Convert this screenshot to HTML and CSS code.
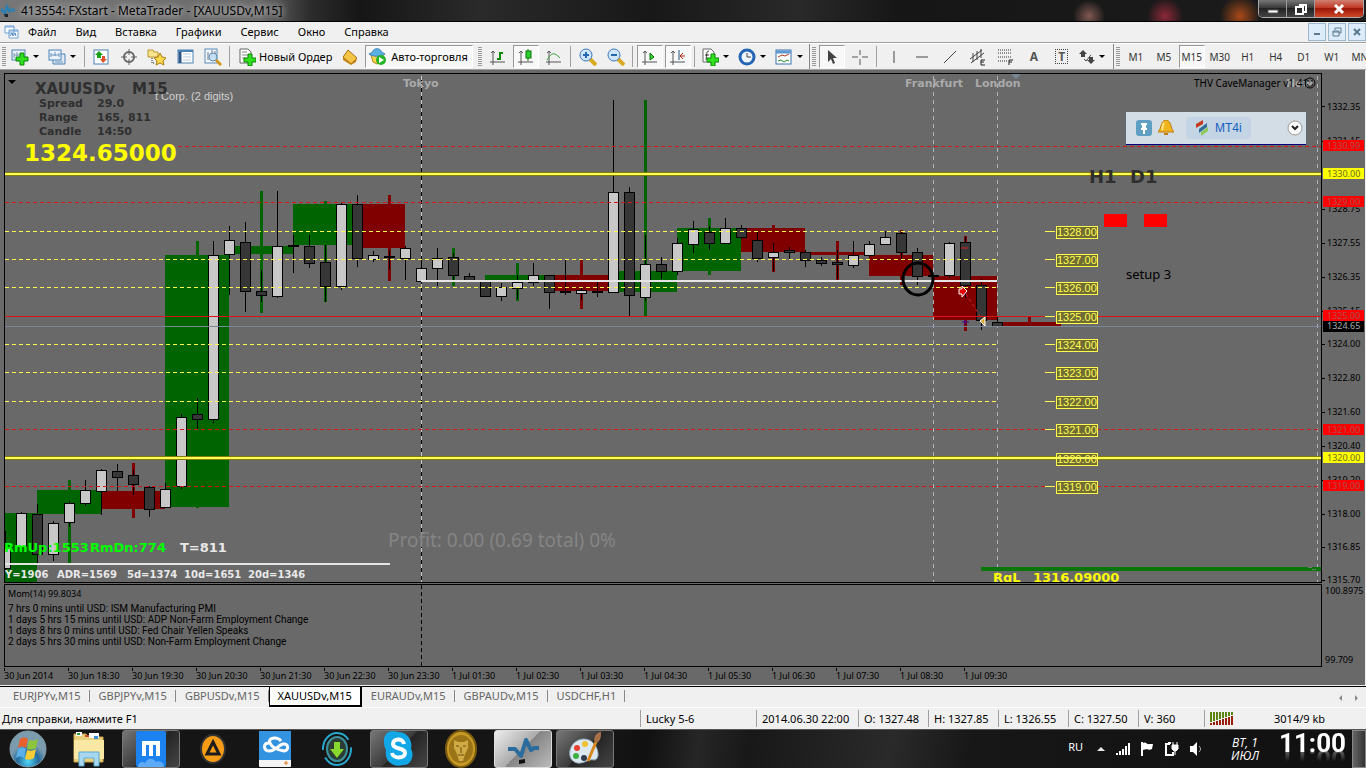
FILE: index.html
```html
<!DOCTYPE html>
<html lang="ru">
<head>
<meta charset="utf-8">
<title>413554: FXstart - MetaTrader - [XAUUSDv,M15]</title>
<link rel="stylesheet" href="styles.css">
</head>
<body>
<header class="titlebar">
  <svg class="title-icon" width="16" height="14" viewBox="0 0 16 14"><path d="M1 5l4 4 2-6 3 4 2-1 3 0" fill="none" stroke="#2f7fae" stroke-width="3"/><path d="M4 10h4v3h-3z" fill="#15232c"/></svg>
  <h1 class="title">413554: FXstart - MetaTrader - [XAUUSDv,M15]</h1>
  <div class="caption">
    <button class="cap" aria-label="Свернуть"><svg width="12" height="12"><rect x="1" y="7" width="10" height="3" fill="#fff" stroke="#555"/></svg></button>
    <button class="cap" aria-label="Развернуть"><svg width="14" height="12"><path d="M5 2h7v7h-2M2 4h7v7h-7z" fill="none" stroke="#fff" stroke-width="2"/></svg></button>
    <button class="cap cap-close" aria-label="Закрыть"><svg width="12" height="12"><path d="M2 2l8 8M10 2l-8 8" stroke="#fff" stroke-width="3"/></svg></button>
  </div>
</header>

<nav class="menubar">
  <svg width="15" height="14" viewBox="0 0 15 14"><path d="M1 1h9v7h-9zM5 5h9v8h-9z" fill="#fff" stroke="#6aa0d0"/><path d="M1 2h9M5 6h9" stroke="#6aa0d0"/><path d="M6 11l2-3 1 3 2-3 1 3" fill="none" stroke="#4a80c0"/></svg>
  <button>Файл</button><button>Вид</button><button>Вставка</button><button>Графики</button><button>Сервис</button><button>Окно</button><button>Справка</button>
  <div class="mdi">
    <button aria-label="Свернуть окно"><svg width="10" height="10"><path d="M2 7h6" stroke="#5c7890" stroke-width="2"/></svg></button>
    <button aria-label="Восстановить окно"><svg width="10" height="10"><path d="M3 3v-2h6v5h-2M1 4h6v5h-6zM1 5h6" fill="none" stroke="#5c7890"/></svg></button>
    <button aria-label="Закрыть окно"><svg width="10" height="10"><path d="M2 2l6 6M8 2l-6 6" stroke="#5c7890" stroke-width="2"/></svg></button>
  </div>
</nav>

<div class="toolbar">
  <div class="group">
    <i class="grip"></i>
    <button class="tb drop" aria-label="Новый график"><svg width="18" height="18"><rect x="1" y="2" width="13" height="10" fill="#eaf3fb" stroke="#4c82b4"/><path d="M3 5v5M6 4v4M3 7h7" stroke="#7a98b4" fill="none"/><path d="M9 5h4v4h4v4h-4v4h-4v-4h-4v-4h4z" fill="#2fe01c" stroke="#0b850b"/></svg></button>
    <button class="tb drop" aria-label="Профили"><svg width="18" height="18"><path d="M5 6h12v10h-12z" fill="#dfeaf5" stroke="#4c82b4"/><rect x="1" y="2" width="12" height="10" fill="#eaf3fb" stroke="#4c82b4"/><path d="M3 5v4M7 4v4M11 5v4M3 7h8M7 14h8" stroke="#6d94ba"/></svg></button>
    <i class="sep"></i>
    <button class="tb" aria-label="Обзор рынка"><svg width="16" height="16"><rect x="1" y="1" width="14" height="14" fill="#fff" stroke="#4c82b4"/><path d="M6 2l4 4h-2v3h-4v-3h-2z" fill="#18a018"/><path d="M10 14l4-4h-2v-3h-3v3h-2z" fill="#e05028"/></svg></button>
    <button class="tb" aria-label="Окно данных"><svg width="16" height="16"><circle cx="8" cy="8" r="5" fill="none" stroke="#666" stroke-width="2"/><path d="M8 0v6M8 10v6M0 8h6M10 8h6" stroke="#666"/></svg></button>
    <button class="tb" aria-label="Навигатор"><svg width="20" height="18"><path d="M1 2h5l1 2h4v5h-10z" fill="#f8e48c" stroke="#b9962c"/><path d="M5 10v5h3" fill="none" stroke="#222" stroke-dasharray="1 1"/><path d="M13 5l2 4 4 1-3 3 1 4-4-2-4 2 1-4-3-3 4-1z" fill="#fbd84c" stroke="#a87c14"/></svg></button>
    <button class="tb" aria-label="Терминал"><svg width="17" height="16"><rect x="1" y="1" width="15" height="13" fill="#fff" stroke="#4c82b4"/><path d="M3 1v13" stroke="#2e5686" stroke-width="3"/><path d="M1 2h15" stroke="#4c82b4" stroke-width="2"/><path d="M6 5h8M6 8h8M6 11h8" stroke="#b8cbdd"/></svg></button>
    <button class="tb" aria-label="Тестер стратегий"><svg width="18" height="18"><rect x="1" y="1" width="12" height="14" fill="#f2f6fa" stroke="#5a8cba"/><path d="M4 4v8M8 2v8M11 3v8" stroke="#778"/><circle cx="9" cy="9" r="4" fill="#c4e2f6" fill-opacity=".8" stroke="#5a8cba"/><path d="M12 12l5 5" stroke="#d09a20" stroke-width="3"/></svg></button>
    <i class="sep"></i>
    <button class="tb order"><svg width="18" height="18"><path d="M2 1h8l3 3v11h-11z" fill="#fff" stroke="#666"/><path d="M4 4h5M4 7h6M4 10h4" stroke="#888"/><path d="M10 6h4v4h4v4h-4v4h-4v-4h-4v-4h4z" fill="#2fe01c" stroke="#0b850b"/></svg><span>Новый Ордер</span></button>
    <button class="tb" aria-label="Редактор"><svg width="18" height="16"><path d="M7 1l9 8-6 6-8-7z" fill="#f5c548" stroke="#a4701a"/><path d="M2 8l8 6 6-5-1 4-5 3-8-5z" fill="#c48318"/></svg></button>
    <button class="tb pressed auto"><svg width="18" height="17"><path d="M3 7h12l-2 7-4 2-4-2z" fill="#f5d34c" stroke="#b28a18"/><path d="M1 6c3-2 4-1 4-3 1-3 7-3 8 0 0 2 2 1 4 3-4 3-12 3-16 0z" fill="#5ab0e4" stroke="#3a82b4"/><circle cx="13" cy="12" r="5" fill="#24b324"/><path d="M11 9v6l5-3z" fill="#fff"/></svg><span>Авто-торговля</span></button>
  </div>
  <div class="group charts">
    <i class="grip"></i>
    <button class="tb" aria-label="Бары"><svg width="16" height="16"><path d="M3 2v14M0 13h15M1 4l2-2 2 2" stroke="#555" fill="none"/><path d="M10 3v8M10 4h3M7 10h3" stroke="#0c8a0c" stroke-width="2"/></svg></button>
    <button class="tb pressed" aria-label="Свечи"><svg width="16" height="16"><path d="M3 2v14M0 13h15M1 4l2-2 2 2" stroke="#555" fill="none"/><path d="M10 0v12" stroke="#077507"/><rect x="8" y="2" width="5" height="7" fill="#2ccf2c" stroke="#077507"/></svg></button>
    <button class="tb" aria-label="Линия"><svg width="16" height="16"><path d="M3 2v14M0 13h15M1 4l2-2 2 2" stroke="#555" fill="none"/><path d="M1 11c5-8 7-8 13-2" fill="none" stroke="#38a038"/></svg></button>
    <i class="sep"></i>
    <button class="tb" aria-label="Увеличить"><svg width="18" height="18"><path d="M11 11l6 6" stroke="#d9ab20" stroke-width="4"/><circle cx="7" cy="7" r="6" fill="#cfe6fa" stroke="#3b78bc"/><path d="M4 7h6M7 4v6" stroke="#2468b0" stroke-width="2"/></svg></button>
    <button class="tb" aria-label="Уменьшить"><svg width="18" height="18"><path d="M11 11l6 6" stroke="#d9ab20" stroke-width="4"/><circle cx="7" cy="7" r="6" fill="#cfe6fa" stroke="#3b78bc"/><path d="M4 7h6" stroke="#2468b0" stroke-width="2"/></svg></button>
    <i class="sep"></i>
    <button class="tb pressed" aria-label="Автопрокрутка"><svg width="16" height="16"><path d="M3 2v14M0 13h15M1 4l2-2 2 2" stroke="#555" fill="none"/><path d="M8 4v7l4-3z" fill="#38d038" stroke="#077507"/></svg></button>
    <button class="tb pressed" aria-label="Сдвиг графика"><svg width="16" height="16"><path d="M3 2v14M0 13h15M1 4l2-2 2 2" stroke="#555" fill="none"/><path d="M9 1v10" stroke="#27557c"/><path d="M15 7h-4M13 4l-3 3 3 3" stroke="#b0280c" fill="none"/></svg></button>
    <i class="sep"></i>
    <button class="tb drop" aria-label="Индикаторы"><svg width="18" height="18"><path d="M2 1h8l3 3v10h-11z" fill="#fff" stroke="#666"/><path d="M8 3c-3 0-2 4-3 9M4 7h4" stroke="#333" fill="none"/><path d="M10 6h4v4h4v4h-4v4h-4v-4h-4v-4h4z" fill="#2fe01c" stroke="#0b850b"/></svg></button>
    <button class="tb drop" aria-label="Периодичность"><svg width="18" height="18"><circle cx="9" cy="9" r="7" fill="#eef6fe" stroke="#2464b4" stroke-width="3"/><path d="M9 5v4h4" fill="none" stroke="#444"/></svg></button>
    <button class="tb drop" aria-label="Шаблоны"><svg width="18" height="16"><rect x="1" y="1" width="15" height="14" fill="#fff" stroke="#3a72aa"/><path d="M1 3h15" stroke="#5c98d4" stroke-width="3"/><path d="M3 8l4-2 3 1 4-2" fill="none" stroke="#a83c20"/><path d="M3 12l3-1 3 2 3-2 2 1" fill="none" stroke="#208a30"/></svg></button>
  </div>
  <div class="group charts bordered">
    <i class="grip"></i>
    <button class="tb pressed" aria-label="Курсор"><svg width="16" height="16"><path d="M4 1v12l3-3 2 5 2-1-2-5h4z" fill="#444"/></svg></button>
    <button class="tb" aria-label="Перекрестие"><svg width="16" height="16"><path d="M8 1v5M8 10v6M0 8h6M10 8h6" stroke="#555"/></svg></button>
    <i class="sep"></i>
    <button class="tb" aria-label="Вертикальная линия"><svg width="16" height="16"><path d="M8 2v12" stroke="#444"/></svg></button>
    <button class="tb" aria-label="Горизонтальная линия"><svg width="16" height="16"><path d="M2 8h12" stroke="#444"/></svg></button>
    <button class="tb" aria-label="Трендовая линия"><svg width="16" height="16"><path d="M2 14l12-12" stroke="#444"/></svg></button>
    <button class="tb" aria-label="Канал"><svg width="18" height="18"><path d="M1 11l12-9M2 15l13-10M4 5v9M8 3v9M12 1v9" stroke="#444"/><path d="M16 12h-4v5h4M12 14h3" fill="none" stroke="#222"/></svg></button>
    <button class="tb" aria-label="Фибоначчи"><svg width="18" height="18"><path d="M1 2h14M1 5h14M1 9h14M1 13h9" stroke="#333" stroke-dasharray="1 1"/><path d="M12 17v-5h4M12 14h3" fill="none" stroke="#222"/></svg></button>
    <button class="tb letter">A</button>
    <button class="tb letter" aria-label="Текстовая метка"><span class="label-t">T</span></button>
    <button class="tb drop" aria-label="Стрелки"><svg width="16" height="16"><path d="M4 1l4 4h-2v3h-4v-3h-2z" fill="#444"/><path d="M5 10l2 2 5-6" fill="none" stroke="#444"/><path d="M12 15l4-4h-2v-3h-4v3h-2z" fill="#444"/></svg></button>
  </div>
  <div class="group bordered periods">
    <i class="grip"></i>
    <button class="tb">M1</button><button class="tb">M5</button><button class="tb pressed">M15</button><button class="tb">M30</button><button class="tb">H1</button><button class="tb">H4</button><button class="tb">D1</button><button class="tb">W1</button><button class="tb">MN</button>
  </div>
</div>

<main class="chart">
  <section class="pane">
    <svg class="canvas" shape-rendering="crispEdges">
      <g transform="translate(-5 -74)">
        <g fill="#006400">
          <path d="M5 513h32v71h-32zM37 490h64v24h-64zM165 255h64v252h-64zM229 246h64v8h-64zM293 204h64v41h-64zM485 275h64v7h-64zM613 271h64v21h-64zM677 228h64v43h-64z"/>
          <path d="M68 480h3v85h-3zM196 241h3v14h-3zM196 507h3v1h-3zM260 191h3v122h-3zM324 201h3v101h-3zM452 248h3v38h-3zM516 263h3v38h-3zM644 100h3v216h-3zM708 218h3v57h-3z"/>
        </g>
        <g fill="#800000">
          <path d="M101 491h64v18h-64zM357 204h48v44h-48zM549 275h64v16h-64zM741 228h64v24h-64zM805 252h64v3h-64zM869 255h64v21h-64zM933 276h64v44h-64zM997 322h64v4h-64z"/>
          <path d="M132 463h3v55h-3zM388 195h3v86h-3zM580 260h3v49h-3zM772 225h3v47h-3zM836 241h3v39h-3zM900 230h3v55h-3zM964 236h3v95h-3zM1028 317h3v10h-3z"/>
        </g>
        <g stroke="#aeb4b8" stroke-dasharray="4 4"><path d="M933 76V584M997 76V584M1317 76V584"/></g>
        <path d="M421 76V584" stroke="#000"/><path d="M421 76V584" stroke="#c8c8c8" stroke-dasharray="4 4"/>
        <path stroke="#000" d="M5 531V570M21 512V546M37 504V565M53 521V561M69 501V527M85 480V506M101 469V515M117 464V491M133 470V495M149 486V517M165 483V508M181 414V489M197 398V429M213 241V423M229 226V295M245 222V312M261 270V302M277 191V298M293 235V273M309 235V268M325 245V302M341 202V290M357 195V267M373 251V262M389 250V270M405 246V280M421 259V282M437 248V286M453 253V281M469 273V281M485 280V297M501 283V301M517 275V299M533 263V286M549 275V309M565 260V295M581 288V300M597 280V297M613 100V292M629 187V316M645 235V301M661 257V279M677 238V275M693 221V253M709 226V250M725 218V243M741 225V239M757 232V262M773 243V271M789 247V260M805 250V267M821 257V266M837 250V279M853 241V268M869 241V257M885 231V244M901 231V260M917 248V285M949 242V278M965 237V298M981 279V330M997 317V327"/>
        <path stroke="#000" stroke-width="2" d="M288 246h11M384 257h11M560 292h11M592 292h11M928 276h11"/>
        <path fill="#c8c8c8" stroke="#000" d="M0 548h10v20h-10zM16 513h10v33h-10zM48 523h10v31h-10zM64 503h10v19h-10zM80 490h10v13h-10zM96 470h10v21h-10zM160 489h10v18h-10zM176 417h10v69h-10zM208 255h10v164h-10zM224 240h10v14h-10zM272 246h10v50h-10zM336 204h10v82h-10zM368 255h10v4h-10zM400 248h10v10h-10zM416 268h10v13h-10zM432 258h10v10h-10zM496 287h10v9h-10zM512 282h10v6h-10zM528 275h10v7h-10zM576 290h10v3h-10zM608 192h10v100h-10zM640 264h10v33h-10zM672 243h10v28h-10zM688 229h10v15h-10zM720 228h10v15h-10zM768 252h10v5h-10zM848 255h10v10h-10zM864 244h10v11h-10zM880 237h10v7h-10zM944 243h10v32h-10z"/>
        <path fill="#373737" stroke="#000" d="M32 514h10v40h-10zM112 471h10v6h-10zM128 475h10v9h-10zM144 487h10v22h-10zM192 414h10v5h-10zM240 242h10v49h-10zM256 291h10v4h-10zM304 246h10v17h-10zM320 262h10v24h-10zM352 204h10v54h-10zM448 257h10v18h-10zM464 276h10v5h-10zM480 281h10v15h-10zM544 275h10v17h-10zM624 192h10v103h-10zM656 264h10v7h-10zM704 232h10v11h-10zM736 228h10v9h-10zM752 240h10v18h-10zM784 250h10v2h-10zM800 252h10v8h-10zM816 260h10v3h-10zM832 262h10v2h-10zM896 233h10v19h-10zM912 252h10v24h-10zM960 242h10v43h-10zM976 285h10v35h-10zM992 322h10v4h-10z"/>
        <g stroke="#ffff50" stroke-dasharray="4 3"><path d="M5 231H997M5 259H997M5 287H997M5 344H997M5 372H997M5 401H997"/></g>
        <g stroke="#d81414" stroke-dasharray="4 3"><path d="M178 146H4000M5 202H4000M5 429H4000M5 486H4000"/></g>
        <path d="M5 316H4000" stroke="#d81414"/>
        <path d="M5 326H4000" stroke="#778899"/>
        <path d="M5 174H4000M5 458H4000" stroke="#817c10" stroke-width="4"/>
        <path d="M5 174H4000M5 458H4000" stroke="#ffff50" stroke-width="2"/>
        <path d="M421 281H997M5 564H390" stroke="#e4e4e4" stroke-width="2"/>
        <path d="M981 569H4000" stroke="#0a760a" stroke-width="4"/>
        <path d="M1312 569h4M1308 567h4" stroke="#697d69"/>
        <g stroke="#ffff50" fill="#6f6b35">
          <path d="M1045 231h10M1045 259h10M1045 287h10M1045 316h10M1045 344h10M1045 372h10M1045 401h10M1045 429h10M1045 486h10"/>
          <path d="M1056 226h41v12h-41zM1056 254h41v12h-41zM1056 282h41v12h-41zM1056 311h41v12h-41zM1056 339h41v12h-41zM1056 367h41v12h-41zM1056 396h41v12h-41zM1056 424h41v12h-41zM1056 453h41v12h-41zM1056 481h41v12h-41z"/>
        </g>
        <g class="level">
          <text x="1057" y="236">1328.00</text><text x="1057" y="264">1327.00</text><text x="1057" y="292">1326.00</text><text x="1057" y="321">1325.00</text><text x="1057" y="349">1324.00</text><text x="1057" y="377">1323.00</text><text x="1057" y="406">1322.00</text><text x="1057" y="434">1321.00</text><text x="1057" y="463">1320.00</text><text x="1057" y="491">1319.00</text>
        </g>
        <path d="M1056 458h41" stroke="#ffff50" stroke-width="2"/>
        <g shape-rendering="auto">
          <ellipse cx="918" cy="279" rx="15" ry="16" fill="none" stroke="#000" stroke-width="3"/>
          <path d="M966 294l16 25" stroke="#e02020" stroke-dasharray="3 3"/>
          <path d="M959 289h3v-3l5 5-5 6v-3h-3z" fill="#e00000" stroke="#fff"/>
          <path d="M985 317v9l-5-5z" fill="#d8a838" stroke="#fff"/>
          <path d="M961 248h7" stroke="#e02020"/>
          <path d="M962 322h7M965 320v5" stroke="#4000a0"/>
          <path d="M8 80h8l-4 4z" fill="#000"/>
          <path d="M1011 74h10l-5 5z" fill="#778899"/>
        </g>
        <path d="M1104 214h23v13h-23zM1144 214h23v13h-23z" fill="#f00"/>
        <g class="heavy session"><text x="403" y="87">Tokyo</text><text x="905" y="87">Frankfurt</text><text x="975" y="87">London</text><text x="1286" y="87">New</text></g>
        <text class="corp" x="155" y="100">t Corp. (2 digits)</text>
        <g class="heavy info">
          <text class="symbol" x="35" y="94">XAUUSDv</text><text class="symbol" x="132" y="94">M15</text>
          <text x="39" y="107">Spread</text><text x="97" y="107">29.0</text>
          <text x="39" y="121">Range</text><text x="97" y="121">165, 811</text>
          <text x="39" y="135">Candle</text><text x="97" y="135">14:50</text>
          <text class="frames" x="1089" y="183">H1</text><text class="frames" x="1130" y="183">D1</text>
        </g>
        <text class="heavy price" x="24" y="161">1324.65000</text>
        <g class="heavy range"><text class="up" x="4" y="552">RmUp:1553</text><text class="up" x="90" y="552">RmDn:774</text><text x="180" y="552">T=811</text></g>
        <g class="heavy adr"><text x="5" y="578">Y=1906</text><text x="57" y="578">ADR=1569</text><text x="127" y="578">5d=1374</text><text x="184" y="578">10d=1651</text><text x="248" y="578">20d=1346</text></g>
        <g class="heavy low"><text x="993" y="582">RgL</text><text x="1033" y="582">1316.09000</text></g>
        <text class="profit" x="388" y="547">Profit: 0.00 (0.69 total) 0%</text>
        <text class="setup" x="1126" y="279">setup 3</text>
        <text class="expert" x="1194" y="87">THV CaveManager v1.41</text>
        <g fill="none" stroke="#000" shape-rendering="auto"><circle cx="1310" cy="83" r="5"/><path d="M1307 84c1 3 5 3 6 0M1308 80v2M1312 80v2"/></g>
      </g>
    </svg>
    <div class="mt4i">
      <svg width="16" height="16"><rect width="16" height="16" rx="3" fill="#5f9fc4"/><path d="M5 4h6M5 9h6" stroke="#fff" stroke-width="2"/><path d="M8 4v5" stroke="#fff" stroke-width="4"/><path d="M8 9v5" stroke="#fff" stroke-width="2"/></svg>
      <svg class="bell" width="16" height="16"><path d="M8 0c-6 1-4 8-8 12h16c-4-4-2-11-8-12z" fill="#f0b51c" stroke="#c07c0c"/><path d="M6 13h4v2h-4z" fill="#c07c0c"/><path d="M6 3c-2 2-1 5-2 7" stroke="#ffe88a" stroke-width="2" fill="none"/></svg>
      <button class="mt4i-btn"><svg width="15" height="16"><path d="M1 4l7-4v4l-7 4z" fill="#c43a20"/><path d="M4 9l8-6v4l-8 6z" fill="#2f6f9c"/><path d="M6 12l7-5v4l-7 5z" fill="#8fc85a"/></svg>MT4i</button>
      <button class="round" aria-label="Меню"><svg width="16" height="16"><circle cx="8" cy="8" r="7" fill="#fafafa" stroke="#999"/><path d="M5 6l3 3 3-3" fill="none" stroke="#222" stroke-width="2"/></svg></button>
    </div>
  </section>
  <svg class="scale" shape-rendering="crispEdges">
    <g transform="translate(-1322 -73)">
      <path stroke="#000" d="M1322 106h3M1322 141h3M1322 209h3M1322 243h3M1322 277h3M1322 311h3M1322 344h3M1322 378h3M1322 412h3M1322 446h3M1322 480h3M1322 514h3M1322 547h3M1322 580h3"/>
      <g><text x="1327" y="110">1332.35</text><text x="1327" y="144">1331.15</text><text x="1327" y="212">1328.75</text><text x="1327" y="246">1327.55</text><text x="1327" y="280">1326.35</text><text x="1327" y="314">1325.15</text><text x="1327" y="347">1324.00</text><text x="1327" y="381">1322.80</text><text x="1327" y="415">1321.60</text><text x="1327" y="449">1320.40</text><text x="1327" y="483">1319.20</text><text x="1327" y="517">1318.00</text><text x="1327" y="550">1316.85</text><text x="1327" y="583">1315.70</text></g>
      <path fill="#f00" d="M1323 140h41v11h-41zM1323 196h41v11h-41zM1323 310h41v11h-41zM1323 424h41v11h-41zM1323 480h41v11h-41z"/>
      <path fill="#ff0" d="M1323 168h41v11h-41zM1323 452h41v11h-41z"/>
      <path d="M1323 321h41v11h-41z"/>
      <g class="tag-red"><text x="1327" y="149">1330.99</text><text x="1327" y="205">1329.00</text><text x="1327" y="319">1325.00</text><text x="1327" y="433">1321.00</text><text x="1327" y="489">1319.00</text></g>
      <g class="tag-yellow"><text x="1327" y="177">1330.00</text><text x="1327" y="461">1320.00</text></g>
      <text class="tag-black" x="1327" y="329">1324.65</text>
    </g>
  </svg>
  <section class="pane momentum">
    <svg class="canvas" shape-rendering="crispEdges"><path d="M416 0V83" stroke="#000" stroke-dasharray="4 3"/></svg>
    <p class="mom">Mom(14) 99.8034</p>
    <p>7 hrs 0 mins until USD: ISM Manufacturing PMI</p>
    <p>1 days 5 hrs 15 mins until USD: ADP Non-Farm Employment Change</p>
    <p>1 days 8 hrs 0 mins until USD: Fed Chair Yellen Speaks</p>
    <p>2 days 5 hrs 30 mins until USD: Non-Farm Employment Change</p>
  </section>
  <div class="mom-scale"><span>100.8975</span><span>99.709</span></div>
  <div class="times">
    <span>30 Jun 2014</span><span>30 Jun 18:30</span><span>30 Jun 19:30</span><span>30 Jun 20:30</span><span>30 Jun 21:30</span><span>30 Jun 22:30</span><span>30 Jun 23:30</span><span>1 Jul 01:30</span><span>1 Jul 02:30</span><span>1 Jul 03:30</span><span>1 Jul 04:30</span><span>1 Jul 05:30</span><span>1 Jul 06:30</span><span>1 Jul 07:30</span><span>1 Jul 08:30</span><span>1 Jul 09:30</span>
  </div>
</main>

<div class="tabs">
  <button>EURJPYv,M15</button><button>GBPJPYv,M15</button><button>GBPUSDv,M15</button><button class="active">XAUUSDv,M15</button><button>EURAUDv,M15</button><button>GBPAUDv,M15</button><button>USDCHF,H1</button>
  <svg class="tab-scroll" width="24" height="8"><path d="M5 1v6l-3-3zM18 1v6l3-3z" fill="#888"/></svg>
</div>

<footer class="status">
  <span class="hint">Для справки, нажмите F1</span>
  <span class="w-profile">Lucky 5-6</span>
  <span class="w-time">2014.06.30 22:00</span>
  <span class="w-ohlc">O: 1327.48</span><span class="w-ohlc">H: 1327.85</span><span class="w-ohlc">L: 1326.55</span><span class="w-ohlc">C: 1327.50</span>
  <span class="w-vol">V: 360</span>
  <span class="w-net"><svg width="24" height="13" shape-rendering="crispEdges"><path d="M1 0v10M4 0v9M7 0v8M10 0v7M13 0v6M16 0v5M19 0v4M22 0v3" stroke="#5c8210" stroke-width="2"/><path d="M1 11v2M4 10v3M7 9v4M10 8v5M13 7v6M16 6v7M19 5v8M22 4v9" stroke="#98200c" stroke-width="2"/></svg>3014/9 kb</span>
</footer>

<div class="taskbar">
  <button class="start" aria-label="Пуск"><svg width="38" height="38" viewBox="0 0 38 38"><defs><radialGradient id="orb" cy=".85"><stop offset="0" stop-color="#4fd8f8"/><stop offset=".6" stop-color="#246a9c"/><stop offset="1" stop-color="#7c9cae"/></radialGradient></defs><circle cx="19" cy="19" r="18" fill="url(#orb)" stroke="#829aa8"/><path d="M11 9c3-2 5-2 8 0l-2 9c-3-2-5-2-8 0z" fill="#e8612c"/><path d="M20 10c3 1 6 1 9-1l-2 9c-3 2-6 2-9 1z" fill="#8cc43c"/><path d="M9 19c3-2 5-2 8 0l-2 9c-3-2-5-2-8 0z" fill="#5ab0e8"/><path d="M18 20c3 1 6 1 9-1l-2 9c-3 2-6 2-9 1z" fill="#f8cc34"/></svg></button>
  <button class="task" aria-label="Проводник"><svg width="34" height="36" viewBox="0 0 34 36"><path d="M2 3h12l2 3h15v25h-29z" fill="#e9cf7c" stroke="#c8a84c"/><path d="M4 1h6v4h-6zM17 2h10v5h-10z" fill="#fff"/><path d="M5 2h3v2h-3z" fill="#2a9c3a"/><path d="M13 4h4v2h-4z" fill="#d44a28"/><path d="M22 5h4v3h-4z" fill="#3b8fd0"/><path d="M2 9h30v19h-30z" fill="#f8e8a4"/><path d="M7 21h20v14h-5v-8h-10v8h-5z" fill="#a8d8f0" stroke="#5ca8d0"/></svg></button>
  <button class="task open" aria-label="Maxthon"><svg width="30" height="36" viewBox="0 0 30 36"><rect width="30" height="36" rx="2" fill="#1c82f0"/><path d="M8 25v-13h14v13M15 13v12" fill="none" stroke="#fff" stroke-width="4"/><path d="M2 36c0-5 5-6 7-4 3-6 9-5 11-1 4-2 8 1 8 5z" fill="#5caaf8"/></svg></button>
  <button class="task" aria-label="AIMP"><svg width="28" height="34" viewBox="0 0 28 34"><ellipse cx="14" cy="17" rx="13" ry="15" fill="#333"/><ellipse cx="14" cy="17" rx="11" ry="13" fill="#f79c16"/><path d="M14 10l6 12h-12z" fill="none" stroke="#1c1c1c" stroke-width="3"/></svg></button>
  <button class="task" aria-label="Облако"><svg width="32" height="36" viewBox="0 0 32 36"><rect width="32" height="36" rx="1" fill="#f4f4f4"/><path d="M0 0h32v29h-32z" fill="#3393e0"/><path d="M22 10c-4-5-14-3-11 2 2 5 8 7 14 8 5 0 5-8-1-7-5 1-7 7-14 7-6-1-6-8 0-8" fill="none" stroke="#fff" stroke-width="3"/><path d="M25 32h4M27 30v4" stroke="#e87818"/></svg></button>
  <button class="task" aria-label="Загрузки"><svg width="32" height="38" viewBox="0 0 32 38"><ellipse cx="16" cy="19" rx="14" ry="16" fill="none" stroke="#28a8cc" stroke-width="2" stroke-dasharray="38 8"/><ellipse cx="16" cy="19" rx="10" ry="12" fill="#2c3c34" stroke="#3c909c" stroke-width="2"/><path d="M13 12h6v7h4l-7 9-7-9h4z" fill="#86d82c"/></svg></button>
  <button class="task open" aria-label="Skype"><svg width="32" height="36" viewBox="0 0 32 36"><path d="M4 2c5-3 9-1 11-1 9 0 15 8 13 17 4 6 0 17-8 16-10 3-19-4-17-15-3-6-3-13 1-17z" fill="#12a8e8"/><path d="M21 13c-1-6-11-6-11 0 0 6 12 3 12 9 0 6-12 6-13 0" fill="none" stroke="#fff" stroke-width="4"/></svg></button>
  <button class="task" aria-label="Lion"><svg width="34" height="38" viewBox="0 0 34 38"><ellipse cx="17" cy="19" rx="15" ry="18" fill="#c79a26" stroke="#7c5c10" stroke-width="2"/><ellipse cx="17" cy="19" rx="12" ry="14" fill="#9c7418"/><path d="M10 10l4 2h6l4-2v8l-3 6-2 7h-4l-2-7-3-6z" fill="#d0aa44"/><path d="M12 16h3M19 16h3M17 17v6M14 25h6" stroke="#6c5010"/></svg></button>
  <button class="task current" aria-label="MetaTrader"><svg width="34" height="36" viewBox="0 0 34 36"><path d="M2 18h7l6 7 5-16 5 10 3-2 5 0" fill="none" stroke="#2a6c9c" stroke-width="4" stroke-linejoin="round"/><path d="M13 29l6-1v4l-6 1z" fill="#111"/></svg></button>
  <button class="task open" aria-label="Paint"><svg width="34" height="36" viewBox="0 0 34 36"><path d="M16 8c-12 0-18 14-12 21 8 8 16-2 22 0 8 0 4-21-10-21z" fill="#dce8f0" stroke="#8ca4b4"/><circle cx="9" cy="17" r="3" fill="#e84030"/><circle cx="17" cy="13" r="3" fill="#f0c030"/><circle cx="8" cy="25" r="3" fill="#3cb040"/><circle cx="16" cy="27" r="3" fill="#2c3c4c"/><path d="M20 30l8-19" stroke="#d88820" stroke-width="3"/><path d="M26 10c0-6 4-9 7-9 0 4 0 8-4 11z" fill="#a87048"/></svg></button>
  <div class="tray">
    <span class="lang">RU</span>
    <svg width="10" height="8"><path d="M1 6h8l-4-4z" fill="#e8e8e8"/></svg>
    <svg width="14" height="14"><path d="M1 11v2M4 9v4M7 7v6M10 4v9M13 1v12" stroke="#fff" stroke-width="2"/></svg>
    <svg width="14" height="16"><path d="M2 1v14" stroke="#fff" stroke-width="2"/><path d="M3 2c3-2 4 2 6 1h4l-1 5c-3 2-4-1-9 1z" fill="#fff"/></svg>
    <svg width="15" height="16"><path d="M6 3h-4v11h7v-3M4 2h3" fill="none" stroke="#fff" stroke-width="2"/><path d="M8 4h6v4l-2 2h-2l-2-2zM9 1v3M13 1v3M11 9v5" fill="#fff" stroke="#fff"/></svg>
    <svg width="14" height="16"><path d="M1 5h3l4-4v14l-4-4h-3z" fill="#fff"/><path d="M10 5c2 2 2 4 0 6" fill="none" stroke="#bbb"/></svg>
    <span class="date">ВТ, 1<br>ИЮЛ</span>
    <time class="clock">11:00</time>
  </div>
  <button class="desk" aria-label="Показать рабочий стол"></button>
</div>
</body>
</html>
```
FILE: styles.css
```css
* { box-sizing: border-box; }
body {
  margin: 0;
  height: 100vh;
  display: flex;
  flex-direction: column;
  overflow: hidden;
  background: #f0f0f0;
  font: 11px/14px "Noto Sans", "DejaVu Sans", sans-serif;
  color: #000;
}
button {
  border: 0;
  padding: 0;
  margin: 0;
  background: none;
  font: inherit;
  color: inherit;
}
svg { flex: none; display: block; }
p { margin: 0; }

/* Window caption */
.titlebar {
  flex: none;
  height: 22px;
  display: flex;
  align-items: center;
  gap: 5px;
  border-bottom: 1px solid #000;
  background:
    radial-gradient(circle at 1089px 16px, #805850 0, transparent 16px),
    radial-gradient(circle at 1165px 16px, #8c2838 0, transparent 18px),
    radial-gradient(circle at 1240px 16px, #a84a18 0, transparent 20px),
    linear-gradient(90deg, #777 0, #686868 260px, #2c2c2c 310px, #161616 360px, #2a2a2a 480px, #181818 650px, #292929 800px, #161616 900px, #1c1c1c 100%);
}
.title {
  margin: 0;
  flex: 1;
  font-size: 12px;
  font-weight: 400;
  text-shadow: 0 0 6px #ccc, 0 0 8px #bbb;
}
.caption {
  align-self: flex-start;
  display: flex;
  margin-right: 2px;
  border: 1px solid #aaa;
  border-top: 0;
  border-radius: 0 0 5px 5px;
  overflow: hidden;
}
.cap {
  width: 28px;
  height: 17px;
  display: flex;
  align-items: center;
  justify-content: center;
  border-right: 1px solid #999;
  background: linear-gradient(#777, #333 50%, #222 50%, #444);
}
.cap-close {
  width: 48px;
  border: 0;
  background: linear-gradient(#d08070, #c03020 50%, #9c1808 50%, #d04828);
}

.menubar {
  flex: none;
  height: 21px;
  display: flex;
  align-items: center;
  padding-left: 4px;
  gap: 19px;
  border-bottom: 1px solid #a0a0a0;
}
.menubar > svg { margin-right: -10px; }
.mdi { margin-left: auto; display: flex; gap: 2px; }
.mdi button {
  width: 18px;
  height: 18px;
  display: flex;
  align-items: center;
  justify-content: center;
  border: 1px solid #9cb8cc;
  background: #dcecfa;
}

/* Toolbars */
.toolbar {
  flex: none;
  height: 27px;
  display: flex;
  overflow: hidden;
  border-top: 1px solid #fff;
  border-bottom: 1px solid #a0a0a0;
}
.group { flex: none; display: flex; align-items: center; margin-right: 2px; }
.bordered { border-left: 1px solid #888; }
.charts { margin-right: 0; }
.grip {
  width: 4px;
  height: 20px;
  margin: 0 2px;
  background: repeating-linear-gradient(#999 0 1px, transparent 1px 2px);
}
.sep { width: 5px; height: 21px; background: linear-gradient(90deg, transparent 2px, #a0a0a0 2px 3px, transparent 3px); }
.charts .sep { width: 6px; }
.tb {
  flex: none;
  width: 28px;
  height: 23px;
  display: flex;
  align-items: center;
  justify-content: center;
}
.drop { width: 37px; justify-content: flex-start; padding-left: 3px; gap: 4px; }
.drop::after { content: ""; border: 3px solid transparent; border-top-color: #000; border-bottom: 0; }
.order { width: auto; padding: 0 4px 0 6px; gap: 3px; font-size: 11px; }
.pressed {
  border: 1px solid #999;
  border-right-color: #fff;
  border-bottom-color: #fff;
  background: #f8f8f8;
  width: 26px;
  margin: 0 1px;
}
.auto { width: auto; padding: 0 4px 0 2px; gap: 5px; }
.letter { font: 700 12px "Noto Sans", sans-serif; color: #555; }
.label-t { width: 13px; line-height: 13px; border: 1px dotted #444; }
.periods { font-size: 10px; color: #333; }

/* Chart window */
.chart {
  flex: 1;
  min-height: 0;
  display: grid;
  grid-template: minmax(0, 1fr) 83px 17px / minmax(0, 1fr) 43px;
  row-gap: 1px;
  padding: 3px 0 0 4px;
  border-right: 1px solid #f0f0f0;
  background: #696969;
}
.pane { position: relative; overflow: hidden; border: 1px solid #000; }
.canvas { position: absolute; inset: 0; width: 100%; height: 100%; }
.scale { width: 100%; height: 100%; font-size: 9px; }
.tag-red { fill: #a85050; }
.tag-yellow { fill: #6c6c20; }
.tag-black { fill: #aaa; }
.heavy { font-family: "DejaVu Sans", sans-serif; font-weight: 700; font-size: 11px; }
.session { fill: #aaa; }
.info { fill: #2f2f2f; }
.symbol { font-size: 15px; }
.frames { font-size: 18px; }
.price { font-size: 23px; fill: #ff0; }
.range { font-size: 13px; fill: #e8e8e8; }
.up { fill: #0f0; }
.adr { font-size: 10px; fill: #e8e8e8; }
.low { font-size: 13px; fill: #ff0; }
.level, .corp { font-family: "Liberation Sans", sans-serif; font-size: 11px; fill: #ffff50; }
.corp { fill: #d0d0d0; }
.profit { font-size: 19px; fill: #858585; }
.setup { font-size: 13px; }
.expert { font-size: 10px; }
.mt4i {
  position: absolute;
  top: 38px;
  right: 15px;
  width: 180px;
  height: 33px;
  display: flex;
  align-items: center;
  padding: 0 3px 0 10px;
  border-bottom: 1px solid #000080;
  background: #d3dde6;
}
.bell { margin: 0 12px 0 6px; }
.mt4i-btn {
  height: 22px;
  display: flex;
  align-items: center;
  gap: 5px;
  padding: 0 9px;
  border-radius: 4px;
  background: #c3d4e4;
  color: #1560bd;
  font: 12px "Liberation Sans", sans-serif;
}
.round { margin-left: auto; }
.momentum { padding: 3px 3px 0; font: 10px/11px Roboto, sans-serif; }
.mom { font: 9px/12px "Noto Sans", sans-serif; margin-bottom: 3px; }
.mom-scale {
  display: flex;
  flex-direction: column;
  justify-content: space-between;
  padding-left: 3px;
  font-size: 9px;
}
.times { display: grid; grid-auto-flow: column; grid-auto-columns: 64px; overflow: hidden; font-size: 9px; white-space: nowrap; }
.times span { background: linear-gradient(#000, #000) 0 0 / 1px 3px no-repeat; padding-top: 1px; }

/* Chart tabs */
.tabs {
  flex: none;
  height: 22px;
  display: flex;
  align-items: flex-start;
  margin-top: 1px;
  padding-left: 4px;
  border-top: 1px solid #000;
  border-bottom: 1px solid #fff;
  color: #666;
}
.tabs button { padding: 0 9px; line-height: 18px; background: linear-gradient(#888, #888) 100% 3px / 1px 12px no-repeat; }
.tabs .active { background: #fff; color: #000; border: 1px solid #000; border-width: 0 2px 2px 1px; padding: 0 8px; }
.tab-scroll { margin: 7px 5px 0 auto; }

.status { flex: none; height: 21px; display: flex; align-items: center; }
.status span { height: 17px; line-height: 17px; padding-left: 5px; border-left: 1px solid #a0a0a0; }
.status .hint { flex: 1; border: 0; padding-left: 2px; }
.w-profile { width: 116px; }
.w-time { width: 102px; }
.w-ohlc { width: 70px; }
.w-vol { width: 66px; }
.w-net { width: 162px; display: flex; gap: 40px; align-items: center; }

/* Desktop taskbar */
.taskbar {
  flex: none;
  height: 39px;
  display: flex;
  gap: 4px;
  border-top: 1px solid #555;
  background: linear-gradient(100deg, #151515 600px, #111 640px, #262626 690px, #181818 740px, #2a2a2a 880px, #171717 960px, #101010);
}
.start { width: 56px; display: flex; justify-content: center; overflow: hidden; }
.task { width: 58px; display: flex; align-items: center; justify-content: center; overflow: hidden; }
.open { border: 1px solid #777; border-radius: 3px; background: linear-gradient(135deg, #777, #3a3a3a 50%, #242424 50%, #444); }
.current { border: 1px solid #ddd; border-radius: 3px; background: linear-gradient(135deg, #eee, #aaa 50%, #858585 50%, #bbb); }
.tray { margin-left: auto; display: flex; align-items: center; gap: 10px; color: #fff; }
.lang { padding: 0 3px 5px 0; }
.date { margin-left: 18px; font: italic 12px/13px "Open Sans", sans-serif; text-align: center; }
.clock {
  margin: 0 2px 12px 10px;
  font: 700 26px/26px Roboto, sans-serif;
  -webkit-box-reflect: below -10px linear-gradient(transparent 40%, rgba(0, 0, 0, .5));
}
.desk { width: 14px; border: 1px solid #888; background: linear-gradient(90deg, #666, #333); }
```
